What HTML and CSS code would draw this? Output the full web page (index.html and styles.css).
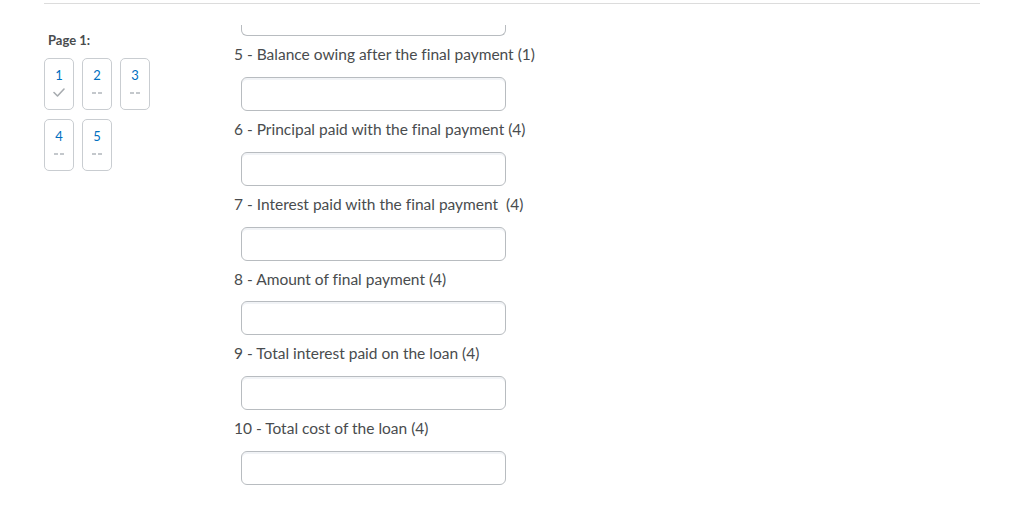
FILE: index.html
```html
<!DOCTYPE html>
<html>
<head>
<meta charset="utf-8">
<link rel="stylesheet" href="styles.css">
</head>
<body>
<div class="page">
  <aside class="sidebar">
    <div class="page-title">Page 1:</div>
    <div class="tiles">
      <div class="tile"><span class="num">1</span><svg class="mark" width="12" height="9" viewBox="0 0 12 9"><path d="M1 4.5 L4.5 8 L11 1" fill="none" stroke="#a8acb0" stroke-width="1.6" stroke-linecap="round" stroke-linejoin="round"/></svg></div>
      <div class="tile"><span class="num">2</span><span class="dash"></span></div>
      <div class="tile"><span class="num">3</span><span class="dash"></span></div>
      <div class="tile"><span class="num">4</span><span class="dash"></span></div>
      <div class="tile"><span class="num">5</span><span class="dash"></span></div>
    </div>
  </aside>
  <main class="questions">
    <div class="input-fragment"></div>
    <div class="q"><label class="label">5 - Balance owing after the final payment (1)</label><input class="field" type="text"></div>
    <div class="q"><label class="label">6 - Principal paid with the final payment (4)</label><input class="field" type="text"></div>
    <div class="q"><label class="label">7 - Interest paid with the final payment&nbsp; (4)</label><input class="field" type="text"></div>
    <div class="q"><label class="label">8 - Amount of final payment (4)</label><input class="field" type="text"></div>
    <div class="q"><label class="label">9 - Total interest paid on the loan (4)</label><input class="field" type="text"></div>
    <div class="q"><label class="label">10 - Total cost of the loan (4)</label><input class="field" type="text"></div>
  </main>
</div>
</body>
</html>
```
FILE: styles.css
```css
html, body {
  margin: 0;
  padding: 0;
  background: #ffffff;
  font-family: Lato, "Open Sans", sans-serif;
  color: #494c4e;
  font-variant-ligatures: none;
}
.page {
  margin: 3px 44px 0 44px;
  width: 936px;
  border-top: 1px solid #dcdcdc;
  display: flex;
}
.sidebar {
  width: 190px;
  flex: none;
}
.page-title {
  font-size: 13px;
  font-weight: 700;
  line-height: 16px;
  margin: 28px 0 0 4px;
  color: #494c4e;
}
.tiles {
  margin-top: 10px;
  display: grid;
  grid-template-columns: repeat(3, 30px);
  column-gap: 8px;
  row-gap: 9px;
}
.tile {
  box-sizing: border-box;
  width: 30px;
  height: 52px;
  border: 1px solid #c9cdd1;
  border-radius: 5px;
  display: flex;
  flex-direction: column;
  align-items: center;
}
.num {
  font-size: 13px;
  line-height: 14px;
  margin-top: 9px;
  color: #006fbf;
}
.mark {
  margin-top: 6px;
}
.dash {
  margin-top: 10px;
  width: 10px;
  height: 2px;
  background: linear-gradient(to right, #c4c8cc 0 4px, transparent 4px 6px, #c4c8cc 6px 10px);
}
.questions {
  flex: 1;
  display: flex;
  flex-direction: column;
}
.input-fragment {
  box-sizing: border-box;
  margin-top: 21px;
  margin-left: 7px;
  width: 265px;
  height: 11px;
  border: 1px solid #b8bcc0;
  border-top: none;
  border-radius: 0 0 6px 6px;
}
.q {
  display: flex;
  flex-direction: column;
  align-items: flex-start;
  padding-top: 8px;
}
.label {
  font-size: 15.5px;
  line-height: 20px;
  color: #494c4e;
}
.field {
  box-sizing: border-box;
  margin: 13px 0 0 7px;
  width: 265px;
  height: 34px;
  border: 1px solid #b8bcc0;
  border-radius: 6px;
  background: #ffffff;
  box-shadow: inset 0 2px 0 0 rgba(185, 194, 208, 0.2);
  outline: none;
  padding: 0 10px;
  font: inherit;
}
.q:nth-child(5) .field { margin-top: 12px; }
```
